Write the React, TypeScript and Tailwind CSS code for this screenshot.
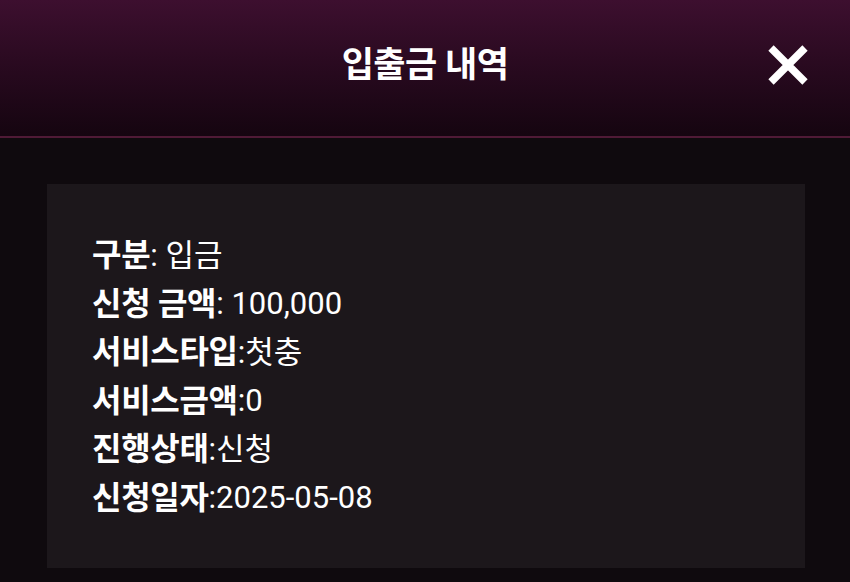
export default function App() {
  const rows: { label: string; value: string; sep: string }[] = [
    { label: "구분", sep: ": ", value: "입금" },
    { label: "신청 금액", sep: ": ", value: "100,000" },
    { label: "서비스타입", sep: ":", value: "첫충" },
    { label: "서비스금액", sep: ":", value: "0" },
    { label: "진행상태", sep: ":", value: "신청" },
    { label: "신청일자", sep: ":", value: "2025-05-08" },
  ];

  return (
    <div
      className="w-[850px] h-[582px] bg-[#0f0a0e] text-white overflow-hidden"
      style={{ fontFamily: "Roboto, 'Noto Sans CJK KR', sans-serif" }}
    >
      <header className="relative h-[138px] flex items-center justify-center bg-gradient-to-b from-[#3d0f2f] to-[#150510] border-b-2 border-[#4f1a36]">
        <h1 className="text-[35px] font-bold tracking-[-0.5px] -mt-[4px]">입출금 내역</h1>
        <button className="absolute right-[41px] top-[44px] w-[42px] h-[42px]" aria-label="닫기">
          <svg viewBox="0 0 42 42" className="w-full h-full">
            <path d="M4 4 L38 38 M38 4 L4 38" stroke="#ffffff" strokeWidth="7.5" strokeLinecap="butt" />
          </svg>
        </button>
      </header>
      <main className="px-[47px] pt-[46px] pr-[45px]">
        <section className="bg-[#1c171b] pl-[45px] pt-[47px] pb-[46px]">
          {rows.map((r) => (
            <div key={r.label} className="h-[48.5px] flex items-center leading-none">
              <span className="font-bold text-[32px] tracking-[-0.3px]">{r.label}</span>
              <span className="whitespace-pre text-[31px]">{r.sep}{r.value}</span>
            </div>
          ))}
        </section>
      </main>
    </div>
  );
}
